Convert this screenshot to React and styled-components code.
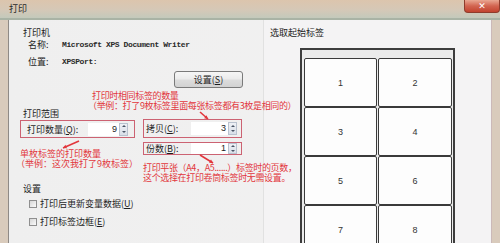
import React from 'react';
import styled, { createGlobalStyle } from 'styled-components';

const cjk = `"Noto Sans CJK SC", "Noto Sans", sans-serif`;

const GlobalStyle = createGlobalStyle`
  html, body {
    margin: 0;
    padding: 0;
    background: #ffffff;
  }
  body {
    font-family: ${cjk};
  }
`;

const Window = styled.div`
  position: relative;
  width: 500px;
  height: 243px;
  overflow: hidden;
  display: flex;
  flex-direction: column;
  background: #d9cbbc;
  font-family: ${cjk};
  font-size: 9px;
  color: #1e1e1e;
`;

const TitleBar = styled.div`
  flex: none;
  height: 18px;
  display: flex;
  justify-content: space-between;
  align-items: flex-start;
  padding-left: 9px;
  background: linear-gradient(180deg, #dcc5ad 0%, #d5c8b7 55%, #c3c9bb 100%);
  border-bottom: 2px solid #a9b3a5;
`;

const Title = styled.span`
  line-height: 12px;
  padding-top: 3px;
  color: #2a2a2a;
`;

const CloseButton = styled.div`
  width: 34px;
  height: 12px;
  display: flex;
  align-items: center;
  justify-content: center;
  background: linear-gradient(180deg, #e9a792 0%, #d26450 50%, #c2432f 100%);
  border: 1px solid #8e3c2c;
  border-top: none;
  border-radius: 0 0 4px 4px;
  color: #ffffff;
  font-family: "DejaVu Sans", sans-serif;
  font-size: 9px;
  font-weight: bold;
`;

const Frame = styled.div`
  flex: 1;
  display: flex;
  padding: 0 8px;
  min-height: 0;
`;

const Content = styled.div`
  flex: 1;
  display: flex;
  background: linear-gradient(90deg, #efefef 0%, #f2f1f1 100%);
  border-left: 1px solid #8f8a86;
`;

const LeftPane = styled.div`
  width: 240px;
  flex: none;
  padding: 7px 0 0 14px;
  display: flex;
  flex-direction: column;
  align-items: flex-start;
`;

const RightPane = styled.div`
  flex: 1;
  padding: 7px 0 0 6px;
  background: #f4f3f4;
  border-left: 1px solid #e1e1e1;
  border-right: 1px solid #cbb9b9;
`;

const GroupTitle = styled.div`
  line-height: ${({ $line }) => $line || 12}px;
  margin-top: ${({ $gap }) => $gap || 0}px;
  color: #222;
`;

const InfoRow = styled.div`
  display: flex;
  align-items: center;
  line-height: 12px;
  padding-left: 5px;
  margin-top: ${({ $gap }) => $gap || 0}px;
`;

const InfoLabel = styled.span`
  width: 34px;
  flex: none;
`;

const InfoValue = styled.span`
  font-family: "Liberation Mono", monospace;
  font-size: 8px;
  font-weight: bold;
  letter-spacing: -0.4px;
  color: #2b2b2b;
`;

const PushButton = styled.div`
  margin: 3px 0 0 151px;
  width: 69px;
  height: 17px;
  box-sizing: border-box;
  display: flex;
  align-items: center;
  justify-content: center;
  border: 1px solid #7a7a7a;
  border-radius: 3px;
  background: linear-gradient(180deg, #f6f6f6 0%, #ebebeb 48%, #dddddd 52%, #d2d2d2 100%);
  color: #1e1e1e;
`;

const RangeGrid = styled.div`
  display: flex;
  gap: 8px;
  margin-left: -3px;
`;

const FieldColumn = styled.div`
  display: flex;
  flex-direction: column;
  gap: 4px;
`;

const FieldBox = styled.div`
  box-sizing: border-box;
  width: ${({ $w }) => $w}px;
  height: ${({ $h }) => $h}px;
  margin-top: ${({ $gap }) => $gap || 0}px;
  display: flex;
  align-items: center;
  padding-left: ${({ $pad }) => $pad}px;
  border: 1px solid #cc6272;
`;

const FieldLabel = styled.span`
  width: ${({ $w }) => $w}px;
  flex: none;
  line-height: 11px;
  white-space: nowrap;
`;

const SpinBox = styled.div`
  display: flex;
  height: ${({ $h }) => $h}px;
`;

const SpinValue = styled.div`
  width: ${({ $w }) => $w}px;
  background: #ffffff;
  text-align: right;
  padding-right: 2px;
  box-sizing: border-box;
  font-family: "Liberation Sans", sans-serif;
  font-size: 9px;
  line-height: ${({ $h }) => $h}px;
  color: #222;
`;

const Spinner = styled.div`
  width: 9px;
  display: flex;
  flex-direction: column;
  border: 1px solid #b9c2cf;
  box-sizing: border-box;
  background: linear-gradient(180deg, #eef1f6, #d9dfe8);
`;

const SpinHalf = styled.div`
  flex: 1;
  display: flex;
  align-items: center;
  justify-content: center;
  &::after {
    content: '';
    border-left: 2px solid transparent;
    border-right: 2px solid transparent;
    ${({ $down }) =>
      $down ? 'border-top: 2px solid #4a5566;' : 'border-bottom: 2px solid #4a5566;'}
  }
`;

const CheckRow = styled.div`
  display: flex;
  align-items: center;
  gap: 3px;
  padding-left: 6px;
  line-height: 12px;
  margin-top: ${({ $gap }) => $gap || 0}px;
`;

const CheckBox = styled.span`
  width: 8px;
  height: 8px;
  box-sizing: border-box;
  border: 1px solid #8f8f8f;
  background: linear-gradient(135deg, #d6d6d6, #fbfbfb);
`;

const LabelSheet = styled.div`
  margin: 9px 0 0 30px;
  width: 155px;
  box-sizing: border-box;
  border: 2px solid #3d3d3d;
  border-bottom: none;
  padding: 8px 1px 0 2px;
  background: #ebebeb;
  display: grid;
  grid-template-columns: 73px 74px;
  grid-auto-rows: 49px;
  column-gap: 1px;
`;

const LabelCell = styled.div`
  border: 1px solid #3a3a3a;
  border-radius: 2px;
  background: #fdfdfd;
  display: flex;
  align-items: center;
  justify-content: center;
  font-family: "Liberation Sans", sans-serif;
  font-size: 9px;
  color: #333;
`;

const Note = styled.div`
  position: absolute;
  left: ${({ $x }) => $x}px;
  top: ${({ $y }) => $y}px;
  line-height: 10px;
  font-size: 9px;
  letter-spacing: ${({ $tight }) => ($tight ? '-0.35px' : '0')};
  color: #e2363c;
  white-space: pre;
  z-index: 2;
`;

const NoteLine = styled.div`
  padding-left: ${({ $indent }) => $indent || 0}px;
`;

const Arrows = styled.svg`
  position: absolute;
  left: 0;
  top: 0;
  z-index: 2;
  pointer-events: none;
`;

const Arrow = ({ x1, y1, x2, y2 }) => {
  const a = Math.atan2(y2 - y1, x2 - x1);
  const s = 4;
  const p1 = [x2 - s * Math.cos(a - 0.5), y2 - s * Math.sin(a - 0.5)];
  const p2 = [x2 - s * Math.cos(a + 0.5), y2 - s * Math.sin(a + 0.5)];
  return (
    <g>
      <line x1={x1} y1={y1} x2={x2} y2={y2} stroke="#e2363c" strokeWidth="1.6" />
      <polygon points={`${x2},${y2} ${p1.join(',')} ${p2.join(',')}`} fill="#e2363c" />
    </g>
  );
};

const Spin = ({ value, w, h }) => (
  <SpinBox $h={h}>
    <SpinValue $w={w} $h={h}>{value}</SpinValue>
    <Spinner>
      <SpinHalf />
      <SpinHalf $down />
    </Spinner>
  </SpinBox>
);

const cells = [1, 2, 3, 4, 5, 6, 7, 8];

const App = () => (
  <>
    <GlobalStyle />
    <Window>
      <TitleBar>
        <Title>打印</Title>
        <CloseButton>✕</CloseButton>
      </TitleBar>
      <Frame>
        <Content>
          <LeftPane>
            <GroupTitle>打印机</GroupTitle>
            <InfoRow>
              <InfoLabel>名称:</InfoLabel>
              <InfoValue>Microsoft XPS Document Writer</InfoValue>
            </InfoRow>
            <InfoRow $gap={5}>
              <InfoLabel>位置:</InfoLabel>
              <InfoValue>XPSPort:</InfoValue>
            </InfoRow>
            <PushButton>
              设置(<u>S</u>)
            </PushButton>

            <GroupTitle $gap={21} $line={10}>打印范围</GroupTitle>
            <RangeGrid>
              <FieldBox $w={115} $h={18} $gap={1} $pad={6}>
                <FieldLabel $w={61}>
                  打印数量(<u>Q</u>):
                </FieldLabel>
                <Spin value="9" w={31} h={13} />
              </FieldBox>
              <FieldColumn>
                <FieldBox $w={99} $h={19} $pad={2}>
                  <FieldLabel $w={45}>
                    拷贝(<u>C</u>):
                  </FieldLabel>
                  <Spin value="3" w={37} h={13} />
                </FieldBox>
                <FieldBox $w={99} $h={13} $pad={2}>
                  <FieldLabel $w={45}>
                    份数(<u>B</u>):
                  </FieldLabel>
                  <Spin value="1" w={37} h={11} />
                </FieldBox>
              </FieldColumn>
            </RangeGrid>

            <GroupTitle $gap={28}>设置</GroupTitle>
            <CheckRow $gap={3}>
              <CheckBox />
              <span>
                打印后更新变量数据(<u>U</u>)
              </span>
            </CheckRow>
            <CheckRow $gap={6}>
              <CheckBox />
              <span>
                打印标签边框(<u>E</u>)
              </span>
            </CheckRow>
          </LeftPane>

          <RightPane>
            <GroupTitle>选取起始标签</GroupTitle>
            <LabelSheet>
              {cells.map((n) => (
                <LabelCell key={n}>{n}</LabelCell>
              ))}
            </LabelSheet>
          </RightPane>
        </Content>
      </Frame>

      <Note $x={88} $y={91} $tight>
        <NoteLine $indent={4}>打印时相同标签的数量</NoteLine>
        <NoteLine>（举例：打了9枚标签里面每张标签都有3枚是相同的）</NoteLine>
      </Note>
      <Note $x={16} $y={149}>
        <NoteLine $indent={4}>单枚标签的打印数量</NoteLine>
        <NoteLine>（举例：这次我打了9枚标签）</NoteLine>
      </Note>
      <Note $x={143} $y={163} $tight>
        <NoteLine>打印平张（A4，A5......）标签时的页数，</NoteLine>
        <NoteLine>这个选择在打印卷筒标签时无需设置。</NoteLine>
      </Note>

      <Arrows width="500" height="243" viewBox="0 0 500 243">
        <Arrow x1={200} y1={112} x2={208} y2={119} />
        <Arrow x1={79} y1={141} x2={63} y2={148} />
        <Arrow x1={200} y1={155} x2={213} y2={163} />
      </Arrows>
    </Window>
  </>
);

export default App;
